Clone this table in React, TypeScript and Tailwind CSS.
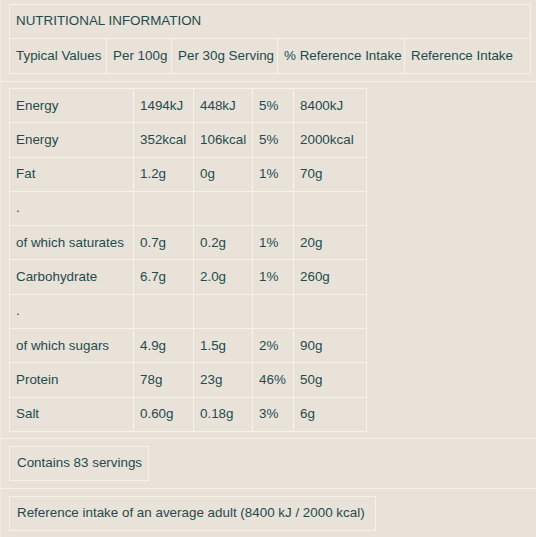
import React from 'react';

const rows: string[][] = [
  ['Energy', '1494kJ', '448kJ', '5%', '8400kJ'],
  ['Energy', '352kcal', '106kcal', '5%', '2000kcal'],
  ['Fat', '1.2g', '0g', '1%', '70g'],
  ['.', '', '', '', ''],
  ['of which saturates', '0.7g', '0.2g', '1%', '20g'],
  ['Carbohydrate', '6.7g', '2.0g', '1%', '260g'],
  ['.', '', '', '', ''],
  ['of which sugars', '4.9g', '1.5g', '2%', '90g'],
  ['Protein', '78g', '23g', '46%', '50g'],
  ['Salt', '0.60g', '0.18g', '3%', '6g'],
];

const headers = ['Typical Values', 'Per 100g', 'Per 30g Serving', '% Reference Intake', 'Reference Intake'];

const cell = 'border border-[#f6f2ea] px-[6px] text-left font-normal whitespace-nowrap';

export default function App() {
  return (
    <div
      className="min-h-[537px] w-[536px] bg-[#e8e2d9] text-[#1f4b4d] text-[13.4px] border-l border-[#ede8e0]"
      style={{ fontFamily: '"Liberation Sans", Arial, sans-serif' }}
    >
      <section className="pl-[8px] pr-[6px] pt-[4px] pb-[7px] border-b border-[#f6f2ea]">
        <table className="w-[521px] table-fixed border-collapse">
          <colgroup>
            <col className="w-[97px]" />
            <col className="w-[65px]" />
            <col className="w-[106px]" />
            <col className="w-[127px]" />
            <col className="w-[126px]" />
          </colgroup>
          <thead>
            <tr>
              <th colSpan={5} className={`${cell} h-[34px]`}>NUTRITIONAL INFORMATION</th>
            </tr>
            <tr>
              {headers.map((h) => (
                <th key={h} className={`${cell} h-[35px]`}>{h}</th>
              ))}
            </tr>
          </thead>
        </table>
      </section>

      <section className="pl-[8px] py-[6px] border-b border-[#f6f2ea]">
        <table className="w-[357px] table-fixed border-collapse">
          <colgroup>
            <col className="w-[124px]" />
            <col className="w-[60px]" />
            <col className="w-[59px]" />
            <col className="w-[41px]" />
            <col className="w-[73px]" />
          </colgroup>
          <tbody>
            {rows.map((r, i) => (
              <tr key={i}>
                {r.map((c, j) => (
                  <td key={j} className={`${cell} h-[34.3px]`}>{c}</td>
                ))}
              </tr>
            ))}
          </tbody>
        </table>
      </section>

      <section className="pl-[8px] py-[7px] border-b border-[#f6f2ea]">
        <div className="inline-flex items-center h-[35px] w-[140px] px-[7px] border border-[#f6f2ea] whitespace-nowrap">
          Contains 83 servings
        </div>
      </section>

      <section className="pl-[8px] py-[7px]">
        <div className="inline-flex items-center h-[35px] w-[367px] px-[7px] border border-[#f6f2ea] whitespace-nowrap">
          Reference intake of an average adult (8400 kJ / 2000 kcal)
        </div>
      </section>
    </div>
  );
}
